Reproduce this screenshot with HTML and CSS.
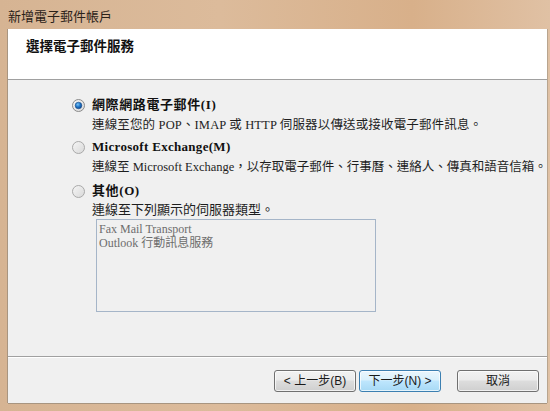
FILE: index.html
```html
<!DOCTYPE html>
<html lang="zh-Hant">
<head>
<meta charset="utf-8">
<title>新增電子郵件帳戶</title>
<link rel="stylesheet" href="styles.css">
</head>
<body>
<div class="window">
  <div class="titlebar">新增電子郵件帳戶</div>
  <div class="frame">
    <div class="client">
      <div class="header">選擇電子郵件服務</div>
      <div class="content">
        <div class="option">
          <div class="opt-row">
            <svg class="radio" width="13" height="13" viewBox="0 0 13 13">
              <defs>
                <linearGradient id="rb" x1="0" y1="0" x2="1" y2="1">
                  <stop offset="0" stop-color="#f6f6f6"/>
                  <stop offset="1" stop-color="#d8d8d8"/>
                </linearGradient>
                <radialGradient id="dot" cx="0.4" cy="0.35" r="0.7">
                  <stop offset="0" stop-color="#7cc4f6"/>
                  <stop offset="0.5" stop-color="#2077c9"/>
                  <stop offset="1" stop-color="#0b3f86"/>
                </radialGradient>
              </defs>
              <circle cx="6.5" cy="6.5" r="6" fill="url(#rb)" stroke="#8a8a8a" stroke-width="1"/>
              <circle cx="6.5" cy="6.5" r="3.3" fill="url(#dot)" stroke="#1c4f8a" stroke-width="0.6"/>
            </svg>
            <span class="opt-label opt-label-cjk">網際網路電子郵件(I)</span>
          </div>
          <div class="opt-desc opt-desc-1">連線至您的 POP、IMAP 或 HTTP 伺服器以傳送或接收電子郵件訊息。</div>
        </div>
        <div class="option option-2">
          <div class="opt-row">
            <svg class="radio" width="13" height="13" viewBox="0 0 13 13">
              <circle cx="6.5" cy="6.5" r="6" fill="url(#rb)" stroke="#a9a9a9" stroke-width="1"/>
            </svg>
            <span class="opt-label">Microsoft Exchange(M)</span>
          </div>
          <div class="opt-desc">連線至 Microsoft Exchange，以存取電子郵件、行事曆、連絡人、傳真和語音信箱。</div>
        </div>
        <div class="option option-3">
          <div class="opt-row">
            <svg class="radio" width="13" height="13" viewBox="0 0 13 13">
              <circle cx="6.5" cy="6.5" r="6" fill="url(#rb)" stroke="#a9a9a9" stroke-width="1"/>
            </svg>
            <span class="opt-label opt-label-cjk">其他(O)</span>
          </div>
          <div class="opt-desc opt-desc-3">連線至下列顯示的伺服器類型。</div>
          <div class="listbox">
            <div class="list-item">Fax Mail Transport</div>
            <div class="list-item">Outlook 行動訊息服務</div>
          </div>
        </div>
      </div>
      <div class="footer">
        <button class="btn">&lt; 上一步(B)</button>
        <button class="btn btn-default">下一步(N) &gt;</button>
        <button class="btn btn-cancel">取消</button>
      </div>
    </div>
  </div>
</div>
</body>
</html>
```

FILE: styles.css
```css
html, body {
  margin: 0;
  padding: 0;
}
body {
  width: 550px;
  height: 411px;
  overflow: hidden;
  background: #d9b898;
  font-family: "Liberation Serif", "Noto Sans CJK TC", serif;
  font-size: 12.5px;
  color: #1e1e1e;
}
.window {
  width: 550px;
  height: 411px;
  display: flex;
  flex-direction: column;
  background: linear-gradient(90deg, #d6b493 0%, #dcbb9b 40%, #d8b08a 75%, #e0c1a4 100%);
}
.titlebar {
  height: 29px;
  line-height: 31px;
  padding-left: 8px;
  font-family: "Noto Sans CJK TC", sans-serif;
  font-size: 13px;
  color: #2a2118;
  box-sizing: border-box;
}
.frame {
  flex: 1;
  padding: 0 4px 8px 8px;
  display: flex;
}
.client {
  flex: 1;
  display: flex;
  flex-direction: column;
  background: #f0f0f0;
  box-shadow: -1px 0 0 #a89580, 1px 0 0 #b8a58f, 0 1px 0 #a89580;
}
.header {
  height: 51px;
  box-sizing: border-box;
  background: #ffffff;
  border-bottom: 1px solid #a0a0a0;
  padding: 7px 0 0 18px;
  font-family: "Noto Sans CJK TC", sans-serif;
  font-weight: bold;
  font-size: 13.5px;
  line-height: 18px;
  color: #111;
}
.content {
  height: 277px;
  box-sizing: border-box;
  padding: 16px 0 0 64px;
  display: flex;
  flex-direction: column;
  border-bottom: 1px solid #a0a0a0;
}
.option-2 {
  margin-top: 4px;
}
.option-3 {
  margin-top: 6px;
}
.opt-row {
  display: flex;
  align-items: center;
  height: 18px;
}
.radio {
  display: block;
  margin-right: 7px;
}
.opt-label {
  font-weight: bold;
  font-size: 13px;
  line-height: 18px;
  color: #111;
  letter-spacing: 0.3px;
}
.opt-label-cjk {
  letter-spacing: 0.6px;
}
.opt-desc {
  margin: 2px 0 0 20px;
  line-height: 18px;
  white-space: nowrap;
}
.opt-desc-1 {
  letter-spacing: 0.15px;
}
.opt-desc-3 {
  margin-top: 1px;
  font-size: 13px;
}
.listbox {
  margin: 0 0 0 24px;
  width: 280px;
  height: 93px;
  box-sizing: border-box;
  border: 1px solid #a5b5c8;
  background: #f0f0f0;
  padding: 2px 2px;
  font-size: 12px;
  color: #6d6d6d;
}
.list-item {
  line-height: 14px;
  white-space: nowrap;
}
.footer {
  flex: 1;
  display: flex;
  align-items: center;
  padding: 0 0 0 266px;
  border-top: 1px solid #ffffff;
}
.btn {
  width: 82px;
  height: 22px;
  box-sizing: border-box;
  border: 1px solid #707070;
  border-radius: 3px;
  background: linear-gradient(#f2f2f2 0%, #ebebeb 45%, #dddddd 50%, #cfcfcf 100%);
  font-family: "Liberation Sans", "Noto Sans CJK TC", sans-serif;
  font-size: 12px;
  line-height: 18px;
  color: #1a1a1a;
  padding: 0;
  margin: 0 3px 0 0;
  box-shadow: inset 0 0 0 1px rgba(255,255,255,0.7);
}
.btn-default {
  border-color: #3c7fb1;
  background: linear-gradient(#eaf6fd 0%, #d9f0fc 45%, #bee6fd 50%, #a7d9f5 100%);
}
.btn-cancel {
  margin-left: 13px;
}
```
